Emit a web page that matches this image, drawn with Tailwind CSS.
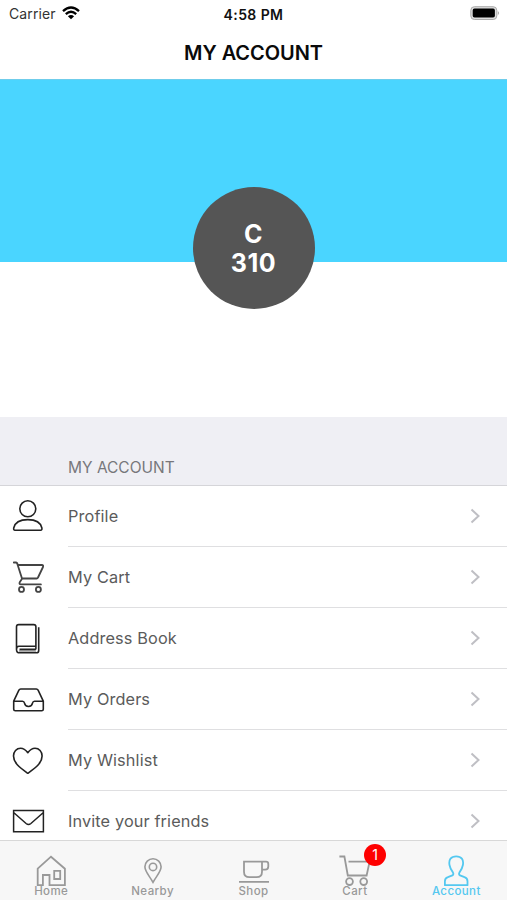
<!DOCTYPE html>
<html lang="en">
<head>
<meta charset="utf-8">
<title>My Account</title>
<script src="https://cdn.jsdelivr.net/npm/@tailwindcss/browser@4"></script>
</head>
<body class="bg-white">
<div class="relative flex h-[900px] w-[507px] flex-col overflow-hidden bg-white font-['Inter','Liberation_Sans',sans-serif]">
  <header class="h-[79px] shrink-0">
    <div class="grid h-7 grid-cols-[1fr_auto_1fr] items-center pr-[7px] pl-[9px]">
      <div class="flex items-center gap-[6px]">
        <span class="-mt-[2px] text-[14px] tracking-[0.1px] text-[#333]">Carrier</span>
        <svg class="-mt-[2px] h-[14px] w-[18px]" viewBox="0 0 18 14" fill="none" stroke="#000" stroke-width="2.3"><path d="M1 5.2Q9-2.2 17 5.2M3.8 8.2Q9 3.4 14.2 8.2"/><path d="M9 13.3 5.9 10.3Q9 7.8 12.1 10.3Z" fill="#000" stroke="none"/></svg>
      </div>
      <span class="-ml-[2px] text-center text-[14px] font-semibold tracking-[0.4px] whitespace-nowrap text-[#111]">4:58 PM</span>
      <svg class="-mt-[2px] h-[16px] w-[32px] justify-self-end" viewBox="0 0 32 16"><rect x="2.8" y="1.7" width="26" height="12.8" rx="3.6" fill="#ddd" stroke="#aaa"/><rect x="4.7" y="3.6" width="22.2" height="9" rx="1.8"/><path d="M29.8 6q2.6 2.1 0 4.2Z" fill="#aaa"/></svg>
    </div>
    <h1 class="text-center text-[20px] leading-[50px] font-semibold tracking-[-0.06px] text-[#0a0a0a]">MY ACCOUNT</h1>
  </header>
  <section class="h-[338px] shrink-0">
    <div class="flex h-[183px] justify-center border-t border-[#6fcdeb] bg-[#4ad5ff] pt-[107px]">
      <div class="flex h-[122px] w-[122px] shrink-0 flex-col items-center justify-center rounded-full bg-[#555] pt-[2px] text-[25px] leading-[29px] font-bold tracking-[0.5px] text-white"><span>C</span><span>310</span></div>
    </div>
  </section>
  <h2 class="h-[69px] shrink-0 border-b border-[#d5d5d9] bg-[#efeff4] pt-[39px] pl-[68px] text-[15.5px] leading-6 text-[#77777b]">MY ACCOUNT</h2>
  <ul class="text-[16.3px] tracking-[0.12px] text-[#5b5b5b]">
    <li class="flex h-[61px] pl-[10px]">
      <svg class="h-[60px] w-[38px]" viewBox="10 486 38 60" fill="none" stroke="#222" stroke-width="1.6" stroke-linejoin="round"><circle cx="27.8" cy="508.8" r="8"/><path d="M15 530.3Q13.4 530.3 13.7 528C15 522 20 519.6 27.8 519.6S40.600 522 41.900 528Q42.200 530.3 40.600 530.3Z"/></svg>
      <div class="ml-5 flex flex-1 items-center justify-between border-b border-[#dfdfe1] pr-[26px]"><span>Profile</span><svg class="h-4 w-[11px]" viewBox="0 0 11 16" fill="none" stroke="#bfbfc4" stroke-width="2"><path d="m1.500 1.500 7 6.500-7 6.500"/></svg></div>
    </li>
    <li class="flex h-[61px] pl-[10px]">
      <svg class="h-[60px] w-[38px]" viewBox="10 547 38 60" fill="none" stroke="#444" stroke-width="1.8" stroke-linejoin="round" stroke-linecap="round"><path d="M13.800 562.500h2.200q1.200 0 1.700 2.500l4.300 13.500h14.500q1-.1 1.500-1l5-10.500q.7-2-1.200-2H18.200M22.200 578.500l-2.500 3.700q-.8 2.200 1.200 2.200h20"/><circle cx="21.500" cy="589.400" r="2.500"/><circle cx="38.400" cy="589.400" r="2.500"/></svg>
      <div class="ml-5 flex flex-1 items-center justify-between border-b border-[#dfdfe1] pr-[26px]"><span>My Cart</span><svg class="h-4 w-[11px]" viewBox="0 0 11 16" fill="none" stroke="#bfbfc4" stroke-width="2"><path d="m1.500 1.500 7 6.500-7 6.500"/></svg></div>
    </li>
    <li class="flex h-[61px] pl-[10px]">
      <svg class="h-[60px] w-[38px]" viewBox="10 608 38 60" fill="none" stroke="#222" stroke-width="1.6" stroke-linejoin="round"><path d="M18.700 624.600h15q2.200 0 2.200 2.200v19.400H19q-2.500 0-2.500 3.200v-22.600q0-2.200 2.200-2.200ZM16.500 649.400q0 3.400 3.300 3.400h16.500q2.400 0 2.400-2.400V627.300M35.900 646.200v2.200q0 1-1 1H19.500"/><path d="M19 651h17" stroke-width=".7"/></svg>
      <div class="ml-5 flex flex-1 items-center justify-between border-b border-[#dfdfe1] pr-[26px]"><span>Address Book</span><svg class="h-4 w-[11px]" viewBox="0 0 11 16" fill="none" stroke="#bfbfc4" stroke-width="2"><path d="m1.500 1.500 7 6.500-7 6.500"/></svg></div>
    </li>
    <li class="flex h-[61px] pl-[10px]">
      <svg class="h-[60px] w-[38px]" viewBox="10 669 38 60" fill="none" stroke="#222" stroke-width="1.6" stroke-linejoin="round"><path d="M13.700 701.200v8q0 1.600 1.600 1.600h26.400q1.600 0 1.600-1.600v-8l-5.200-11q-.6-1.200-1.800-1.200H20.700q-1.200 0-1.800 1.200ZM13.700 701.200h8.800q1.600 0 2 2 .7 3.300 4 3.300t4-3.300q.4-2 2-2h8.800"/></svg>
      <div class="ml-5 flex flex-1 items-center justify-between border-b border-[#dfdfe1] pr-[26px]"><span>My Orders</span><svg class="h-4 w-[11px]" viewBox="0 0 11 16" fill="none" stroke="#bfbfc4" stroke-width="2"><path d="m1.500 1.500 7 6.500-7 6.500"/></svg></div>
    </li>
    <li class="flex h-[61px] pl-[10px]">
      <svg class="h-[60px] w-[38px]" viewBox="10 730 38 60" fill="none" stroke="#222" stroke-width="1.6" stroke-linejoin="round"><path d="M27.800 752.700C25.500 749.700 23.400 748.300 20.600 748.300C16.500 748.300 13.500 751.600 13.500 756C13.500 763.300 20.500 768 27.800 773.300C35.100 768 42.100 763.300 42.100 756C42.100 751.600 39.100 748.300 35 748.300C32.200 748.300 30.100 749.700 27.800 752.700Z"/></svg>
      <div class="ml-5 flex flex-1 items-center justify-between border-b border-[#dfdfe1] pr-[26px]"><span>My Wishlist</span><svg class="h-4 w-[11px]" viewBox="0 0 11 16" fill="none" stroke="#bfbfc4" stroke-width="2"><path d="m1.500 1.500 7 6.500-7 6.500"/></svg></div>
    </li>
    <li class="flex h-[61px] pl-[10px]">
      <svg class="h-[60px] w-[38px]" viewBox="10 791 38 60" fill="none" stroke="#222" stroke-width="1.500"><path d="M13.600 810.600h29.800v21.200H13.600ZM13.600 812.500l12.500 11q2.400 2 4.800 0l12.500-11"/></svg>
      <div class="ml-5 flex flex-1 items-center justify-between border-b border-transparent pr-[26px]"><span>Invite your friends</span><svg class="h-4 w-[11px]" viewBox="0 0 11 16" fill="none" stroke="#bfbfc4" stroke-width="2"><path d="m1.500 1.500 7 6.500-7 6.500"/></svg></div>
    </li>
  </ul>
  <nav class="absolute inset-x-0 bottom-0 grid h-[60px] grid-cols-5 border-t border-[#d8d8d8] bg-[#f7f7f7] text-[11.5px] leading-[14px] font-medium tracking-[0.4px] text-[#999]">
    <div class="flex flex-col items-center"><svg class="h-[45px] w-[50px]" viewBox="26 841 50 45" fill="none" stroke="#999" stroke-width="1.800"><path d="M37.700 885.200V868.700L51 856.700l13.900 12v16.500H49.500V875h-6.600v10.200ZM54.200 870.800h6v8.200h-6Z"/></svg><span class="-mt-[2px] ml-[1px]">Home</span></div>
    <div class="flex flex-col items-center"><svg class="ml-[1px] h-[45px] w-[50px]" viewBox="128 841 50 45" fill="none" stroke="#999" stroke-width="1.600"><path d="M153 882.300C149.500 876 144.900 871.500 144.900 866.800a8.100 8.100 0 0 1 16.200 0C161.100 871.500 156.500 876 153 882.300Z"/><circle cx="153" cy="866.900" r="3.700"/></svg><span class="-mt-[2px] ml-[1px]">Nearby</span></div>
    <div class="flex flex-col items-center"><svg class="ml-[1px] h-[45px] w-[50px]" viewBox="228.500 841 50 45" fill="none" stroke="#999" stroke-width="1.800"><path d="M243.500 861.700h18v10q0 5.500-5.500 5.500h-7q-5.500 0-5.500-5.500ZM261.500 861.700h4q2.300 0 2.300 2.300v2.500q0 3.200-3.200 3.200h-3.100M238.500 881.800h30"/></svg><span class="-mt-[2px]">Shop</span></div>
    <div class="relative flex flex-col items-center"><svg class="h-[45px] w-[50px]" viewBox="330 841 50 45" fill="none" stroke="#999" stroke-width="1.800"><path d="M339.400 856.500h5l3.400 19h18.800l3-13.900H348.500"/><circle cx="349.500" cy="881.600" r="3.400"/><circle cx="363.700" cy="881.600" r="3.400"/></svg><span class="-mt-[2px]">Cart</span><span class="absolute top-[3px] left-[60px] h-[22px] w-[22px] rounded-full bg-[#fe0000] text-center text-[14px] leading-[22px] font-normal tracking-normal text-white">1</span></div>
    <div class="flex flex-col items-center text-[#54c8f0]"><svg class="h-[45px] w-[50px]" viewBox="431 841 50 45" fill="none" stroke="currentColor" stroke-width="1.800" stroke-linejoin="round"><path d="M444.900 885.200v-4q0-3 3-4l4.500-1.800q1.600-1 .5-3-2.700-3.500-3.400-7.400C448.500 859.500 451 856.300 456.200 856.300S463.900 859.500 462.900 865q-.7 3.900-3.400 7.400-1.100 2 .5 3l4.500 1.800q3 1 3 4v4Z"/></svg><span class="-mt-[2px]">Account</span></div>
  </nav>
</div>
</body>
</html>
